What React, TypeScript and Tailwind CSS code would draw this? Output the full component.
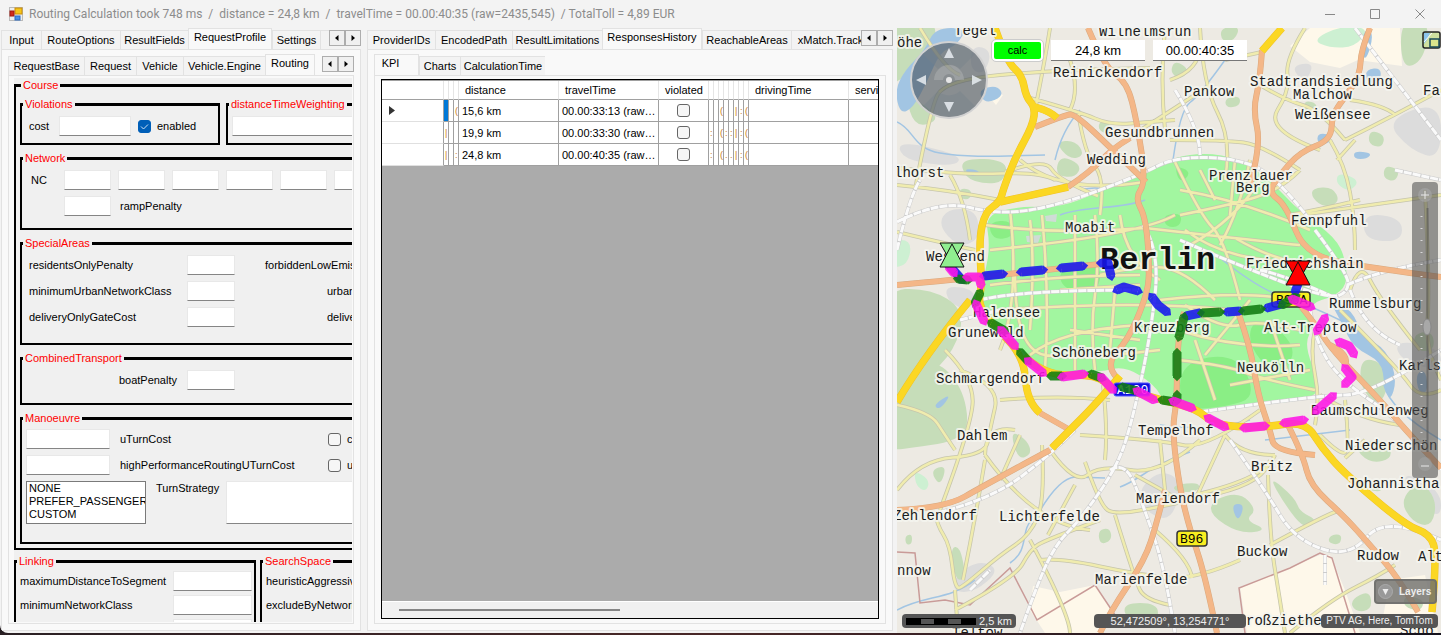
import React from "react";

type TabItem = { label: string; width: string };

function TabStrip({ items, active, small, name }: { items: TabItem[]; active: string; small?: boolean; name: string }) {
  return (
    <div className="flex h-[21px] shrink-0 items-end" role="tablist" aria-label={name}>
      <div className="flex min-w-0 flex-1 items-end overflow-hidden">
        {items.map((t) => {
          const on = t.label === active;
          return (
            <button
              key={t.label}
              role="tab"
              aria-selected={on}
              className={
                t.width +
                " shrink-0 whitespace-nowrap border-l border-t border-[#e2e2e2] text-center " +
                (on ? "h-[21px] border-r bg-[#f9f9f9] pb-1" : "h-[19px] bg-[#f3f3f3]")
              }
            >
              {t.label}
            </button>
          );
        })}
      </div>
      {!small && <Spinner />}
    </div>
  );
}

function Spinner() {
  return (
    <div className="mb-[3px] flex">
      <button aria-label="Previous tabs" className="grid h-4 w-4 place-items-center border border-[#adadad] bg-[#f0f0f0]">
        <svg width="6" height="6" viewBox="0 0 6 6"><path d="M4.5 0v6L1 3z" /></svg>
      </button>
      <button aria-label="Next tabs" className="grid h-4 w-4 place-items-center border border-[#adadad] bg-[#f0f0f0]">
        <svg width="6" height="6" viewBox="0 0 6 6"><path d="M1.5 0v6L5 3z" /></svg>
      </button>
    </div>
  );
}

function Field({ width, label, value }: { width: string; label: string; value?: string }) {
  return (
    <input
      aria-label={label}
      defaultValue={value}
      className={width + " h-5 shrink-0 border border-[#e8e8e8] border-b-[#858585] bg-white px-1 outline-none"}
    />
  );
}

function Check({ label, checked, text }: { label: string; checked?: boolean; text?: string }) {
  return (
    <label className="flex items-center gap-1.5">
      <span className="grid h-[13px] w-[13px] place-items-center">
        <input
          type="checkbox"
          aria-label={label}
          defaultChecked={checked}
          className="col-start-1 row-start-1 h-[13px] w-[13px] appearance-none rounded-[3px] border border-[#666] bg-[#f6f6f6] checked:border-[#005fb8] checked:bg-[#005fb8]"
        />
        {checked && (
          <svg className="pointer-events-none col-start-1 row-start-1" width="9" height="9" viewBox="0 0 9 9">
            <path d="M1 4.5L3.5 7L8 2.5" fill="none" stroke="#cfe2f5" />
          </svg>
        )}
      </span>
      {text}
    </label>
  );
}

function Group({ title, className, children }: { title: string; className: string; children?: React.ReactNode }) {
  return (
    <fieldset className={className + " min-w-0 border-2 border-t-[3px] border-black"}>
      <legend className="ml-px h-[14px] px-0.5 leading-[14px] text-[#ff0000]">{title}</legend>
      {children}
    </fieldset>
  );
}

function RoutingForm() {
  return (
    <div className="ml-[5px] mr-px mt-0.5 min-h-0 flex-1 overflow-hidden bg-[#f0f0f0]">
      <div className="w-[600px]">
        <Group title="Course" className="w-full pb-1 pl-1">
          <div className="flex flex-col gap-1.5 pt-[5px]">
            <div className="flex gap-1.5">
              <Group title="Violations" className="h-12 w-[200px]">
                <div className="flex items-center pl-[7px] pt-[5px]">
                  <span className="w-[30px]">cost</span>
                  <Field label="cost" width="mr-[7px] w-[72px]" />
                  <Check label="enabled" checked text="enabled" />
                </div>
              </Group>
              <Group title="distanceTimeWeighting" className="h-12 w-[300px]">
                <div className="pl-1 pt-[5px]"><Field label="distanceTimeWeighting" width="w-[240px]" /></div>
              </Group>
            </div>
            <Group title="Network" className="h-[79px]">
              <div className="flex flex-col gap-1.5 pl-[9px] pt-[5px]">
                <div className="flex items-center gap-[7px]">
                  <span className="w-[26px]">NC</span>
                  {[1, 2, 3, 4, 5, 6].map((n) => <Field key={n} label={"NC " + n} width="w-[47px]" />)}
                </div>
                <div className="flex items-center gap-[9px] pl-[33px]">
                  <Field label="rampPenalty" width="w-[47px]" /><span>rampPenalty</span>
                </div>
              </div>
            </Group>
            <Group title="SpecialAreas" className="h-[109px]">
              <div className="flex flex-col gap-1.5 pl-[7px] pt-[5px]">
                <div className="flex items-center">
                  <span className="w-[158px]">residentsOnlyPenalty</span>
                  <Field label="residentsOnlyPenalty" width="w-12" />
                  <span className="pl-[30px]">forbiddenLowEmissionZone</span>
                </div>
                <div className="flex items-center">
                  <span className="w-[158px]">minimumUrbanNetworkClass</span>
                  <Field label="minimumUrbanNetworkClass" width="w-12" />
                  <span className="pl-[92px]">urbanPenalty</span>
                </div>
                <div className="flex items-center">
                  <span className="w-[158px]">deliveryOnlyGateCost</span>
                  <Field label="deliveryOnlyGateCost" width="w-12" />
                  <span className="pl-[92px]">deliveryOnly</span>
                </div>
              </div>
            </Group>
            <Group title="CombinedTransport" className="h-[54px]">
              <div className="flex items-center gap-2.5 pt-[5px]">
                <span className="w-[155px] text-right">boatPenalty</span>
                <Field label="boatPenalty" width="w-12" />
              </div>
            </Group>
            <Group title="Manoeuvre" className="h-[133px]">
              <div className="flex flex-col gap-1.5 pl-1 pt-1">
                <div className="flex items-center gap-2.5">
                  <Field label="uTurnCost" width="w-[84px]" />
                  <span className="w-[198px]">uTurnCost</span>
                  <Check label="c" text="c" />
                </div>
                <div className="flex items-center gap-2.5">
                  <Field label="highPerformanceRoutingUTurnCost" width="w-[84px]" />
                  <span className="w-[198px]">highPerformanceRoutingUTurnCost</span>
                  <Check label="u" text="u" />
                </div>
                <div className="flex gap-2.5">
                  <select multiple size={3} aria-label="TurnStrategy" className="h-[43px] w-[120px] overflow-hidden border border-[#7a7a7a] bg-white">
                    {["NONE", "PREFER_PASSENGER", "CUSTOM"].map((o) => (
                      <option key={o} className="h-[13px] px-0.5 leading-[14px]">{o}</option>
                    ))}
                  </select>
                  <span className="w-[60px]">TurnStrategy</span>
                  <textarea aria-label="Strategy" className="h-[43px] w-[240px] resize-none border border-[#e8e8e8] border-b-[#858585] bg-white" />
                </div>
              </div>
            </Group>
          </div>
        </Group>
        <div className="flex gap-1 pt-1">
          <Group title="Linking" className="h-[120px] w-[242px]">
            <div className="flex flex-col gap-1 pl-1 pt-[3px]">
              {["maximumDistanceToSegment", "minimumNetworkClass", "maximumNetworkClass"].map((l) => (
                <div key={l} className="flex items-center">
                  <span className="w-[153px]">{l}</span>
                  <Field label={l} width="w-[79px]" />
                </div>
              ))}
            </div>
          </Group>
          <Group title="SearchSpace" className="h-[120px] w-[300px]">
            <div className="flex flex-col gap-1 pl-1 pt-[3px] leading-5">
              <span>heuristicAggressiveness</span>
              <span>excludeByNetworkClass</span>
            </div>
          </Group>
        </div>
      </div>
    </div>
  );
}

const kpiRows = [
  { d: "15,6 km", t: "00.00:33:13 (raw…", a: ["", "", "("], b: ["", "", "(", "", "", "|", ":", "("] },
  { d: "19,9 km", t: "00.00:33:30 (raw…", a: ["|", "", ""], b: [":", "", "(", ":", ":", "|", ":", "("] },
  { d: "24,8 km", t: "00.00:40:35 (raw…", a: ["|", "", ":"], b: [":", "", "(", ".", ".", "|", ":", "("] },
];

function KpiGrid() {
  const cell = "h-[22px] overflow-hidden whitespace-nowrap border-b border-r border-[#a0a0a0] p-0 ";
  const thin = cell + "pl-px text-[9px] text-[#c87a18]";
  const head = "h-[19px] border-b border-r border-b-[#a0a0a0] border-r-[#e5e5e5] p-0 pl-1.5 text-left font-normal";
  return (
    <div className="mx-[6px] mb-1 mt-[3px] flex min-h-0 flex-1 flex-col overflow-hidden border border-black bg-[#ababab]">
      <div className="min-h-0 flex-1 overflow-hidden">
        <table className="w-[567px] table-fixed border-separate border-spacing-0 border-t border-[#a0a0a0] bg-white">
          <colgroup>
            <col className="w-[62px]" />
            {[1, 2, 3].map((n) => <col key={n} className="w-[5px]" />)}
            <col className="w-[100px]" /><col className="w-[100px]" /><col className="w-[50px]" />
            {[1, 2, 3, 4, 5, 6, 7, 8].map((n) => <col key={n} className="w-[5px]" />)}
            <col className="w-[100px]" /><col className="w-[100px]" />
          </colgroup>
          <thead>
            <tr>
              <th className={head} />
              <th className={head} /><th className={head} /><th className={head} />
              <th className={head}>distance</th><th className={head}>travelTime</th><th className={head}>violated</th>
              {[1, 2, 3, 4, 5, 6, 7, 8].map((n) => <th key={n} className={head} />)}
              <th className={head}>drivingTime</th><th className={head}>serviceTime</th>
            </tr>
          </thead>
          <tbody>
            {kpiRows.map((r, i) => (
              <tr key={r.d}>
                <td className="h-[22px] border-b border-r border-b-[#e0e0e0] border-r-[#a0a0a0] p-0 pl-[7px]">
                  {i === 0 && <svg width="6" height="9" viewBox="0 0 6 9"><path d="M0 0l6 4.5L0 9z" fill="#333" /></svg>}
                </td>
                {r.a.map((v, k) => <td key={k} className={thin + (i === 0 && k === 0 ? " bg-[#0078d7]" : "")}>{v}</td>)}
                <td className={cell + "pl-[3px]"}>{r.d}</td>
                <td className={cell + "pl-[3px]"}>{r.t}</td>
                <td className={cell}><div className="flex justify-center"><Check label={"violated " + r.d} /></div></td>
                {r.b.map((v, k) => <td key={k} className={thin}>{v}</td>)}
                <td className={cell} /><td className={cell} />
              </tr>
            ))}
          </tbody>
        </table>
      </div>
      <div className="flex h-[17px] items-center border-t border-white bg-[#f0f0f0] pl-[17px]">
        <div className="h-0.5 w-[221px] bg-[#858585]" />
      </div>
    </div>
  );
}

/** Rounds the corners of an "M…L…" polyline by running quadratic curves through its midpoints. */
function smooth(d: string): string {
  if (d.includes("C")) return d;
  const closed = d.endsWith("Z");
  const n = (d.replace(/([HV])/g, " $1").match(/[MLHV]?\s*-?\d+(\s-?\d+)?/g) || []);
  const pts: number[][] = [];
  for (const part of n) {
    const v = part.replace(/[MLHV]/g, "").trim().split(/\s+/).map(Number);
    const last = pts[pts.length - 1];
    if (part.includes("H")) pts.push([v[0], last[1]]);
    else if (part.includes("V")) pts.push([last[0], v[0]]);
    else pts.push(v);
  }
  const mid = (a: number[], b: number[]) => (a[0] + b[0]) / 2 + " " + (a[1] + b[1]) / 2;
  if (closed) {
    let out = "M" + mid(pts[pts.length - 1], pts[0]);
    pts.forEach((p, i) => { out += "Q" + p.join(" ") + " " + mid(p, pts[(i + 1) % pts.length]); });
    return out + "Z";
  }
  if (pts.length < 3) return d;
  let out = "M" + pts[0].join(" ");
  for (let i = 1; i < pts.length - 1; i++) {
    const end = i === pts.length - 2 ? pts[i + 1].join(" ") : mid(pts[i], pts[i + 1]);
    out += "Q" + pts[i].join(" ") + " " + end;
  }
  return out;
}

const forests = [
  "M880 20H938L932 48L915 72L880 90Z", "M880 290L930 288L965 310L955 350L925 380L880 410Z", "M880 400L930 355L962 385L970 430L950 442L925 446L880 452Z",
  "M960 158L1008 160L1004 182L985 184L965 178Z", "M905 95L925 105L940 120L915 128Z", "M1060 155L1082 165L1075 178L1055 175Z",
  "M1100 120L1112 125L1110 135L1098 130Z", "M1175 60L1190 70L1180 80L1170 72Z", "M1400 20L1430 20L1424 60L1402 70Z",
  "M1305 100L1318 104L1314 114L1303 110Z", "M1370 130L1385 135L1382 148L1368 144Z", "M1312 188L1333 187L1340 202L1325 208L1312 198Z",
  "M1361 358L1382 362L1390 385L1378 407L1360 387Z", "M1352 445L1385 438L1394 458L1370 464Z", "M1420 480L1437 500L1432 527L1412 522L1400 500Z",
  "M1212 500L1240 492L1257 510L1245 520L1268 530L1240 534L1210 515Z", "M1268 475L1295 498L1300 512L1318 520L1305 530L1285 505Z",
  "M950 548L960 546L966 577L956 582Z", "M1010 430L1027 440L1032 454L1018 460Z", "M1122 603L1158 603L1158 622L1128 622Z", "M930 470L947 465L940 487Z",
  "M1225 98L1240 96L1240 106L1226 108Z", "M1055 142L1075 140L1085 155L1070 160Z", "M960 188L972 190L970 200L958 198Z", "M1173 485L1200 482L1198 492L1175 492Z",
  "M1370 480L1385 482L1382 492L1368 490Z", "M905 536L912 534L912 544L906 545Z", "M1098 530L1110 528L1112 540L1100 545Z", "M1330 535L1342 534L1340 545L1328 543Z", "M1350 600L1370 590L1372 610L1355 612Z",
  "M1412 335L1432 330L1435 350L1418 352Z", "M1385 165L1400 170L1395 182L1383 178Z", "M1220 28L1240 26L1235 40L1222 42Z", "M1405 595L1425 600L1420 612L1403 606Z",
];
const mint = ["M1312 40L1340 26L1370 28L1355 47L1330 48Z", "M890 240L912 240L908 265L890 268Z", "M1338 172L1360 180L1350 192L1336 184Z", "M914 470L930 480L926 492L916 486Z"];
const pale = ["M1290 46L1310 28H1400L1402 66L1358 60L1340 68L1310 62Z", "M1240 587L1320 555L1330 555L1345 590L1360 633H1247Z", "M1033 586L1060 592L1095 585L1112 610L1100 633H1045L1030 610Z", "M1390 580L1425 575L1438 633H1380Z", "M990 90L1003 95L996 105L990 98Z"];
const greys = ["M948 208L977 210L980 240L958 247L938 225Z", "M1160 470L1182 480L1172 522L1145 512L1138 490Z", "M1385 120L1441 100V160L1410 150Z", "M972 45L992 50L985 74L970 70Z", "M1290 66L1315 62L1305 84Z", "M945 285L977 290L970 312L948 302Z", "M1364 213L1402 218L1402 242L1364 240Z", "M897 140L962 155L955 167L903 160Z", "M1400 470L1441 490V520L1415 500Z", "M1395 340L1441 348V372L1400 360Z", "M955 575L980 560L1000 570L975 592L953 592Z"];
const waters = [
  "M935 28H967L957 45L940 52L927 82L913 108L900 114L895 90L905 70L925 50Z", "M978 90L997 85L1004 96L985 104Z", "M963 168L982 171L972 178Z",
  "M1365 28L1374 34L1366 62L1360 50Z", "M1318 133L1332 135L1329 144L1317 143Z", "M1354 151L1372 153L1367 159L1354 159Z",
  "M1328 298L1352 310L1362 335L1387 350L1397 380L1390 402L1384 385L1382 362L1353 347L1343 325Z", "M1231 504L1245 504L1238 523Z", "M952 393L940 410L933 405Z",
  "M1416 373L1426 370L1428 393L1418 392Z", "M1366 69L1382 68L1379 84L1366 82Z",
];
const streams = [
  "M897 122C915 130 912 148 940 153S1000 156 1045 155", "M1145 200C1120 210 1085 205 1060 215", "M1055 160L1062 130L1080 110", "M1173 160L1180 110L1200 95L1225 60",
  "M1032 525C1045 500 1060 478 1075 477L1105 478", "M1120 487C1140 480 1150 465 1190 452", "M897 610C925 595 950 600 975 580", "M1220 258L1260 290L1310 305L1350 325", "M1384 385L1390 410L1441 440", "M1265 440L1350 430", "M1160 425L1205 432L1250 420", "M1010 563C1030 550 1020 530 1032 520", "M1080 190L1110 184L1100 197",
];
const lez = "M985 215L1020 206L1058 208L1100 192L1142 172L1175 157L1205 153L1238 158L1270 180L1300 212L1335 237L1346 260L1347 285L1333 297L1310 303L1314 325L1304 345L1320 384L1312 400L1240 406L1200 412L1165 404L1155 385L1125 366L1100 372L1042 376L1028 355L985 320L977 300L985 275L990 245Z";
const parks = ["M1180 362L1237 353L1257 397L1225 407L1180 410Z", "M1253 318L1282 330L1297 355L1275 377L1248 345Z", "M1058 268L1102 262L1098 294L1063 290Z", "M988 222L1012 220L1014 237L993 240Z", "M1174 165L1192 172L1180 184Z", "M1163 215L1182 213L1180 227L1166 227Z"];

const minor = [
  "M897 168L960 175L1040 172L1055 180", "M1005 172L1045 158L1058 180L1098 196", "M920 28L945 70L960 75", "M915 190L930 110L945 80L1055 70L1150 68", "M897 185L950 190L1000 200",
  "M950 175L965 200L970 240", "M1050 28L1045 60L1035 110", "M1030 98L1080 112L1110 125L1150 122L1175 120", "M1070 60L1080 90L1070 110", "M1078 112L1085 155L1105 178L1100 215",
  "M1165 28L1160 80L1165 130", "M1128 138L1180 105L1210 85", "M1170 80L1200 70L1200 45", "M1200 28L1203 85L1232 140L1225 180", "M1225 60L1262 52", "M1170 140L1225 140L1262 145L1300 170",
  "M1305 28L1285 60L1290 90L1265 130L1320 150", "M1260 85L1285 100L1320 110L1345 140", "M1330 140L1345 165L1355 220L1355 250", "M1345 140L1395 115L1441 90", "M1350 100L1385 105L1395 115", "M1337 160L1355 140", "M1300 215L1441 195", "M1290 215L1340 205L1360 200",
  "M1425 190L1430 290L1425 350L1441 380", "M985 225L1060 235L1145 228", "M1010 210L1020 300L1000 350", "M990 250L1140 235L1175 215", "M1000 310L1140 300L1230 310", "M1030 355L1060 330L1140 325",
  "M1015 275L1015 350L1075 360L1160 350", "M1042 215L1050 300L1045 370", "M1060 290L1140 285", "M1075 215L1075 370", "M1115 290L1110 350", "M1145 228L1250 240L1300 245", "M1175 162L1200 215L1225 240L1240 300", "M1230 215L1235 160", "M1180 215L1230 205L1280 190L1300 170", "M1190 245L1235 220L1260 180", "M1235 238L1290 270L1330 262", "M1250 160L1240 210L1220 245", "M1160 300L1250 290L1290 300",
  "M1178 330L1240 350L1300 345", "M1178 360L1225 365L1265 380L1315 390", "M1185 305L1220 330L1260 320L1300 330", "M1100 275L1140 265L1185 270L1215 300", "M1120 215L1125 260L1160 280", "M1205 355L1250 300", "M1180 190L1240 200L1310 230",
  "M897 405L930 412L945 435L955 450", "M945 350L975 380L970 430L940 510", "M960 370L1000 385L990 430L985 455L920 460L897 490", "M985 460L975 520L963 580", "M1000 400L1060 395L1110 400", "M985 455L1035 525L1090 530", "M1020 435L1000 480", "M1015 430L985 425L985 455",
  "M1042 445L1045 500L1030 535L1000 555L965 585L955 590L950 545L937 525L935 512", "M1050 450L1075 485L1100 465L1160 475L1200 440", "M1103 385L1108 430L1105 460", "M1080 435L1160 440L1205 450L1260 410", "M1075 485L1048 535", "M1085 462L1100 505L1115 515L1170 505L1265 482L1270 460",
  "M1115 515L1135 580L1145 600L1170 605", "M1030 540L1070 615L1070 633", "M1040 560L1060 558L1140 575L1195 580L1240 560", "M955 610L1015 578L1030 550L1045 540L1100 520", "M1135 475L1180 500", "M1160 440L1165 490", "M1155 530L1190 560L1192 578",
  "M1268 475L1270 540L1280 600L1285 633", "M1270 545L1325 515L1340 510", "M1225 435L1240 455L1275 455", "M1225 435L1195 500", "M1275 455L1265 482L1170 500", "M1345 400L1350 450L1340 455L1320 435", "M1315 330L1310 350L1320 400L1315 425", "M1340 310L1400 370L1420 400L1441 390",
  "M1290 633L1330 600L1380 575L1395 565", "M1365 440L1345 458", "M1350 290L1360 260L1380 300L1420 350", "M1320 395L1360 420L1400 425", "M955 590L958 633", "M1020 160L1060 195L1145 182",
  "M1030 220L1035 260L1030 330", "M1095 215L1100 260L1090 330L1095 370", "M990 285L1060 275L1140 275", "M1070 330L1140 340", "M1200 170L1215 200", "M1185 230L1225 260L1290 262", "M1195 340L1215 400", "M1270 320L1290 380", "M1230 385L1310 370", "M897 232L930 240L975 250",
];
const rail = [
  "M897 222L940 200L1000 215L1060 205L1140 175L1175 157L1235 158L1275 175L1310 220", "M897 250L910 195L920 180", "M1175 90L1200 130L1200 155", "M1355 28L1441 140", "M1395 170L1441 180",
  "M980 300L1020 290L1140 290", "M1143 225L1160 250L1150 340L1130 430L1115 470L1080 520L1055 545L1035 590L1020 633", "M1110 470L1125 460L1145 510L1165 570L1175 633", "M1315 230L1345 270L1350 290L1330 300L1230 262L1180 240", "M1347 285L1380 270L1441 260", "M1350 290L1365 330L1400 345", "M1200 412L1320 395L1370 395L1441 350", "M1310 310L1315 340L1340 380L1400 420L1441 470",
  "M1230 440L1265 490L1295 540L1350 558L1385 515L1441 540", "M1325 555L1325 585", "M930 515L990 500L1050 455L1075 430", "M1260 270L1285 275L1340 300", "M970 590L990 570", "M960 320L1000 310",
];
const orange = [
  "M1088 28L1105 68L1127 82L1137 122L1146 182L1135 198L1146 218L1150 275L1145 300L1128 340L1105 365L1117 378", "M1035 127L1065 115L1075 114L1113 150L1146 182", "M1068 187L1090 172L1113 148L1130 138",
  "M1262 50L1260 80L1253 110L1261 145L1250 185", "M1370 28L1361 50L1360 75L1345 97L1332 115L1331 140L1300 152L1280 175L1268 192L1286 205L1305 255L1370 268L1441 277", "M897 285L975 278L1100 264",
  "M1184 312L1177 340L1177 400L1172 430L1180 490L1190 530L1205 575L1217 633", "M1165 490L1157 522L1145 560L1110 612L1100 633", "M897 510L945 508L985 485L1050 450", "M1238 312L1250 345L1258 395L1270 430L1275 452L1315 455", "M1288 425L1303 455L1310 485L1345 517L1370 545L1400 580L1418 612",
  "M1296 300L1316 325L1332 350L1380 400L1410 435L1441 468", "M1330 345L1350 355L1345 365", "M1040 413L1070 430",
];
const yellow = [
  "M995 28L1007 62L1022 75L1026 97L1035 107L1033 125L1015 158L1003 190L1000 202L985 212L979 240L982 285L978 303L990 322L1024 356L1027 402L1040 413", "M1035 107L1050 111L1057 118", "M1000 202L1068 187", "M970 300L925 355L897 402", "M1024 356L1045 376L1095 374L1115 390L1135 392L1165 401L1197 409L1215 425L1260 428L1305 421L1322 448L1345 474L1405 525L1430 534L1437 555L1432 612", "M1120 376L1095 405L1070 430L1052 448", "M1282 28L1262 51",
];
const blueDash = ["M948 264L962 280", "M984 276L1003 274", "M1021 272L1043 270", "M1061 268L1083 266", "M1101 263L1108 263L1111 276", "M1117 290L1124 287L1138 291", "M1152 297L1158 305L1167 312", "M1186 316L1200 313", "M1227 312L1240 311", "M1267 308L1282 304", "M1295 292L1298 284"];
const greenDash = ["M958 279L968 280", "M980 293L975 303", "M991 323L1005 331", "M1020 352L1028 361", "M1051 376L1062 376", "M1091 374L1102 378", "M1122 387L1137 391", "M1162 400L1175 402", "M1177 395L1177 400", "M1177 353L1177 376", "M1179 337L1184 317", "M1202 313L1220 312", "M1243 311L1261 309", "M1282 305L1296 297"];
const pinkDash = ["M949 267L954 273", "M967 277L979 277L981 285", "M976 304L984 321", "M1001 330L1015 346", "M1028 361L1043 373", "M1062 377L1084 374", "M1101 377L1113 390", "M1137 391L1154 400", "M1173 401L1192 408", "M1208 418L1225 427", "M1244 428L1265 426", "M1284 423L1304 420", "M1316 411L1333 396", "M1345 368L1352 377L1345 384", "M1339 342L1349 346L1354 354", "M1325 318L1317 331", "M1292 299L1311 307"];

const places: [string, number, number][] = [
  ["Tegel", 954, 35], ["öhe", 897, 47], ["Wilhelmsruh", 1099, 36], ["Reinickendorf", 1053, 77], ["Stadtrandsiedlung", 1250, 86], ["Malchow", 1293, 99], ["Pankow", 1184, 96], ["Weißensee", 1295, 119], ["Fa", 1423, 95], ["Gesundbrunnen", 1105, 137], ["Wedding", 1087, 164], ["lhorst", 894, 177], ["Prenzlauer", 1209, 180], ["Berg", 1236, 192], ["Fennpfuhl", 1291, 225], ["Moabit", 1065, 232], ["Westend", 926, 261], ["Friedrichshain", 1246, 268], ["Rummelsburg", 1329, 308], ["Halensee", 973, 317], ["Kreuzberg", 1134, 332], ["Alt-Treptow", 1264, 332], ["Grunewald", 948, 337], ["Schöneberg", 1052, 357], ["Neukölln", 1237, 372], ["Karls", 1399, 370], ["Schmargendorf", 936, 383], ["Baumschulenweg", 1311, 415], ["Dahlem", 957, 440], ["Tempelhof", 1138, 435], ["Niederschön", 1345, 450], ["Britz", 1251, 471], ["Johannistha", 1347, 488], ["Mariendorf", 1136, 503], ["Zehlendorf", 893, 520], ["Lichterfelde", 999, 521], ["Buckow", 1237, 556], ["Rudow", 1357, 560], ["Alt", 1418, 561], ["nnow", 897, 575], ["Marienfelde", 1095, 584], ["roßziethe", 1246, 625], ["Teltow", 952, 637], ["Schö", 1400, 635],
];

function Lines({ d, stroke, width, dash }: { d: string[]; stroke: string; width: number; dash?: string }) {
  return <path d={d.map(smooth).join("")} fill="none" stroke={stroke} strokeWidth={width} strokeLinejoin="round" strokeDasharray={dash} />;
}

function Areas({ d, fill }: { d: string[]; fill: string }) {
  return <path d={d.map(smooth).join("")} fill={fill} />;
}

function Route({ d, color, id }: { d: string[]; color: string; id: string }) {
  return (
    <g opacity="0.88">
      <marker id={id} orient="auto-start-reverse" markerUnits="userSpaceOnUse" markerWidth="6" markerHeight="9" refX="0.3" refY="4.5" viewBox="0 0 6 9">
        <path d="M0 0L1 0L5.5 4.5L1 9L0 9Z" fill={color} />
      </marker>
      {d.map((p) => (
        <path key={p} d={p} fill="none" stroke={color} strokeWidth="9" strokeLinejoin="round" markerStart={"url(#" + id + ")"} markerEnd={"url(#" + id + ")"} />
      ))}
    </g>
  );
}

function CityMap() {
  return (
    <svg className="absolute inset-0 h-full w-full" viewBox="897 28 544 605" preserveAspectRatio="xMinYMin slice" role="img" aria-label="Map of Berlin">
      <path d="M0 0H3000V2000H0Z" fill="#edeae3" />
      <Areas d={greys} fill="#dcdcdc" />
      <path d={pale.join("")} fill="#fef8ea" />
      <Areas d={forests} fill="#c6ddb9" />
      <Areas d={mint} fill="#cdf0d2" />
      <Areas d={waters} fill="#a2c5e3" />
      <Areas d={[lez]} fill="#a2f6a0" />
      <Areas d={parks} fill="#8aee85" />
      <path d="M1026 236L1041 235L1038 243L1027 242Z M1045 216L1057 214L1056 222L1046 221Z" fill="#cfdcd6" />
      <Lines d={streams} stroke="#a2c5e3" width={1.5} />
      <path d="M897 552L915 553L920 603L945 600L970 605L1010 568L1037 620L1095 585L1115 615 M1245 633L1239 588L1290 568L1320 553L1332 558L1355 633" fill="none" stroke="#c99b98" strokeWidth="1.5" />
      <Lines d={minor} stroke="#c6c5ac" width={4} />
      <Lines d={minor} stroke="#f0ecae" width={2.5} />
      <Lines d={rail} stroke="#cccccc" width={4} />
      <Lines d={rail} stroke="#fafafa" width={3} dash="8 1" />
      <Lines d={orange} stroke="#d9a97f" width={6} />
      <Lines d={orange} stroke="#f4b788" width={5} />
      <Lines d={yellow} stroke="#efc12a" width={7.5} />
      <Lines d={yellow} stroke="#fbd723" width={6.5} />
      <g fill="#f8ee20" stroke="#333" strokeWidth="1.5">
        <rect x="1177" y="531" width="30" height="15" rx="3" />
        <rect x="1272" y="292" width="38" height="15" rx="3" />
      </g>
      <rect x="1114" y="383" width="36" height="13" rx="2" fill="#1010e0" stroke="#5555ff" />
      <g fontFamily="Liberation Mono, monospace" fontSize="13">
        <text x="1180" y="543">B96</text>
        <text x="1276" y="304">B96A</text>
        <text x="1117" y="394" fill="#fff">A100</text>
      </g>
      <g fontFamily="Liberation Mono, monospace" fontSize="14" fill="#1c1c1c" stroke="#f5f5ef" strokeOpacity="0.85" strokeWidth="4" strokeLinejoin="round" paintOrder="stroke">
        {places.map(([name, x, y]) => <text key={name} x={x} y={y}>{name}</text>)}
        <text x="1100" y="269" fontSize="32" fontWeight="bold" fill="#111">Berlin</text>
      </g>
      <Route d={blueDash} color="#1616ee" id="tip-blue" />
      <Route d={greenDash} color="#117c10" id="tip-green" />
      <Route d={pinkDash} color="#ff16e6" id="tip-pink" />
      <g fill="#90ee90" stroke="#111"><path d="M940 243H964L952 264Z" /><path d="M940 267H964L952 244Z" /></g>
      <g fill="#ff0000" stroke="#111"><path d="M1286 261H1310L1298 282Z" /><path d="M1286 285H1310L1298 262Z" /></g>
    </svg>
  );
}

function Compass() {
  return (
    <svg className="absolute left-3 top-3" width="80" height="80" viewBox="0 0 80 80" role="img" aria-label="Pan control">
      <circle cx="40" cy="40" r="38" fill="#46505a" fillOpacity="0.6" stroke="#d2d2d2" strokeWidth="2" />
      <path d="M14 14A37 37 0 0 1 66 14L51 29A16 16 0 0 0 29 29ZM14 66A37 37 0 0 0 66 66L51 51A16 16 0 0 1 29 51Z" fill="#78828c" fillOpacity="0.45" />
      <path d="M25 40A15 15 0 0 1 55 40H46A6 6 0 0 0 34 40Z" fill="#b9bcbc" fillOpacity="0.4" />
      <path d="M40 8L45 18H35ZM40 72L45 62H35ZM7 40L17 35V45ZM73 40L63 35V45Z" fill="#e2e8ec" fillOpacity="0.9" />
      <circle cx="40" cy="40" r="3" fill="#e6e6e6" />
    </svg>
  );
}

function ZoomBar() {
  return (
    <svg className="absolute right-[3px] top-[154px]" width="26" height="296" viewBox="0 0 26 296" role="img" aria-label="Zoom control">
      <rect width="26" height="296" rx="4" fill="#4b4b4b" fillOpacity="0.56" />
      <path d="M15.5 26V270" stroke="#555" strokeOpacity="0.6" strokeWidth="2" />
      <path d="M9.5 34V265" stroke="#d8d8d8" strokeWidth="2" strokeDasharray="1 11" />
      <circle cx="13" cy="13" r="7" fill="#a8a8a8" fillOpacity="0.6" /><circle cx="13" cy="282" r="7" fill="#a8a8a8" fillOpacity="0.4" />
      <path d="M9 13H17M13 9V17M9 284H17" stroke="#e8e8e8" />
      <ellipse cx="15" cy="145" rx="4" ry="8" fill="#a8a8a8" stroke="#888" />
    </svg>
  );
}

function MapPane() {
  const chip = "whitespace-nowrap rounded bg-[#555] leading-[14px] text-[#eee]";
  return (
    <section className="relative min-w-0 flex-1 overflow-hidden">
      <CityMap />
      <Compass />
      <ZoomBar />
      <div className="absolute left-[95px] top-3 flex items-center gap-2">
        <button className="h-[21px] w-[51px] rounded border-2 border-white bg-[#00ff00] text-[11px] leading-none outline outline-1 outline-[#ccc]">calc</button>
        <input aria-label="Distance" defaultValue="24,8 km" className="h-[21px] w-[94px] border-b border-[#777] bg-white text-center text-[13px]" />
        <input aria-label="Travel time" defaultValue="00.00:40:35" className="h-[21px] w-[94px] border-b border-[#777] bg-white text-center text-[13px]" />
      </div>
      <button aria-label="Overview map" className="absolute right-0 top-[3px]">
        <svg width="19" height="18" viewBox="0 0 19 18">
          <rect x="1" y="1" width="17" height="16" rx="2" fill="#cfe0a0" stroke="#222" strokeWidth="1.5" />
          <path d="M2 2H8L5 9L2 13Z" fill="#8cc4ec" /><path d="M2 11L10 2" stroke="#fff" />
          <rect x="8" y="8" width="9" height="8" fill="#d9e48c" stroke="#1a4a5a" strokeWidth="1.5" />
        </svg>
      </button>
      <button className="absolute bottom-[29px] right-1 flex h-[25px] w-[63px] items-center gap-1.5 rounded border-2 border-[#6e6e6c]/80 bg-[#6e6e6c]/80 pl-0.5 text-[10px] font-bold text-[#eee]">
        <svg width="15" height="15" viewBox="0 0 15 15"><circle cx="7.5" cy="7.5" r="7" fill="#999" stroke="#aaa" /><path d="M4.5 5H10.5L7.5 11Z" fill="#eee" /></svg>
        Layers
      </button>
      <div className={"absolute bottom-[5px] left-[5px] flex w-[114px] items-center justify-between px-1 " + chip}>
        <span className="flex h-[7px] w-[70px] border border-black bg-black">
          {["a", "b", "c", "d", "e"].map((k) => <i key={k} className="h-full flex-1 bg-black even:bg-[#555]" />)}
        </span>
        2,5 km
      </div>
      <div className={"absolute bottom-[5px] right-[195px] w-[152px] text-center " + chip}>52,472509°, 13,254771°</div>
      <div className={"absolute bottom-[5px] right-[3px] w-[117px] text-center text-[10px] " + chip}>PTV AG, Here, TomTom</div>
    </section>
  );
}

export default function App() {
  return (
    <div className="flex h-screen flex-col overflow-hidden bg-[#241c20] font-['Liberation_Sans',Arial,sans-serif] text-[11px] leading-[14px] text-black">
      <div className="flex min-h-0 flex-1 flex-col overflow-hidden rounded-bl-lg bg-[#f3f3f3]">
        <header className="flex h-7 shrink-0 items-center pl-[9px]">
          <svg width="14" height="14" viewBox="0 0 14 14">
            <rect x="0.5" y="0.5" width="13" height="13" fill="#eee" stroke="#bbb" />
            <rect x="6" y="1" width="7" height="6" fill="#f5c518" stroke="#c88a08" />
            <rect x="1" y="4" width="4" height="5" fill="#d02a1c" stroke="#a01a10" />
            <rect x="6" y="9" width="5" height="4" fill="#4a90e8" stroke="#2a6ac0" />
          </svg>
          <h1 className="ml-1.5 flex-1 whitespace-pre font-[Roboto,'Noto_Sans',sans-serif] text-[12px] text-[#8c8c8c]">
            {"Routing Calculation took 748 ms  /  distance = 24,8 km  /  travelTime = 00.00:40:35 (raw=2435,545)  / TotalToll = 4,89 EUR"}
          </h1>
          <div className="flex gap-[35px] pr-4">
            {[["Minimize", "M0 5.5H10"], ["Maximize", "M0.5 0.5H9.5V9.5H0.5Z"], ["Close", "M0.5 0.5L9.5 9.5M9.5 0.5L0.5 9.5"]].map(([n, d]) => (
              <button key={n} aria-label={n}><svg width="10" height="10" viewBox="0 0 10 10"><path d={d} fill="none" stroke="#888" /></svg></button>
            ))}
          </div>
        </header>
        <main className="flex min-h-0 flex-1">
          <section className="flex w-[361px] shrink-0 flex-col pb-0.5 pl-px">
            <TabStrip
              name="Request"
              active="RequestProfile"
              items={[
                { label: "Input", width: "w-10" }, { label: "RouteOptions", width: "w-[79px]" }, { label: "ResultFields", width: "w-[68px]" },
                { label: "RequestProfile", width: "w-[84px]" }, { label: "Settings", width: "w-12" }, { label: "Services", width: "w-[60px]" },
              ]}
            />
            <div className="flex min-h-0 flex-1 flex-col border border-[#e2e2e2] bg-[#f9f9f9] px-[6px] pb-[6px] pt-1">
              <TabStrip
                name="Profile"
                active="Routing"
                items={[
                  { label: "RequestBase", width: "w-[76px]" }, { label: "Request", width: "w-[52px]" }, { label: "Vehicle", width: "w-[47px]" },
                  { label: "Vehicle.Engine", width: "w-[82px]" }, { label: "Routing", width: "w-[50px]" },
                ]}
              />
              <div className="flex min-h-0 flex-1 flex-col border border-[#e2e2e2] pb-px"><RoutingForm /></div>
            </div>
          </section>
          <section className="ml-[6px] mr-1 flex w-[526px] shrink-0 flex-col pb-0.5">
            <TabStrip
              name="Response"
              active="ResponsesHistory"
              items={[
                { label: "ProviderIDs", width: "w-[68px]" }, { label: "EncodedPath", width: "w-[77px]" }, { label: "ResultLimitations", width: "w-[90px]" },
                { label: "ResponsesHistory", width: "w-[100px]" }, { label: "ReachableAreas", width: "w-[89px]" }, { label: "xMatch.TrackMatch", width: "w-[108px]" },
              ]}
            />
            <div className="flex min-h-0 flex-1 flex-col border border-[#e2e2e2] bg-[#f9f9f9] px-[6px] pb-[6px] pt-1">
              <TabStrip
                small
                name="History"
                active="KPI"
                items={[{ label: "KPI", width: "w-[45px] pr-3" }, { label: "Charts", width: "w-[41px]" }, { label: "CalculationTime", width: "w-[85px]" }]}
              />
              <div className="flex min-h-0 flex-1 flex-col border border-[#e2e2e2]"><KpiGrid /></div>
            </div>
          </section>
          <MapPane />
        </main>
      </div>
      <div className="h-0.5 shrink-0 bg-linear-to-r from-[#2a2024] via-[#4a2828] to-[#15121c]" />
    </div>
  );
}
